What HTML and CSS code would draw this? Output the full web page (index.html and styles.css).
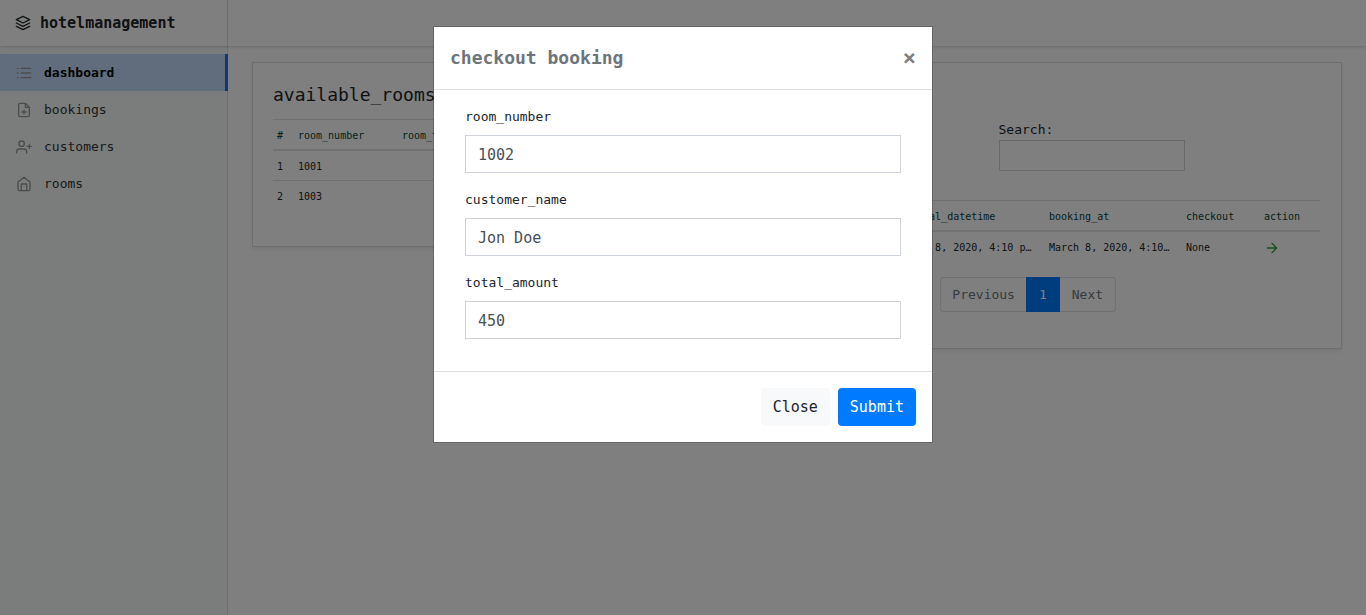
FILE: index.html
```html
<!DOCTYPE html>
<html lang="en">
<head>
<meta charset="utf-8">
<meta name="viewport" content="width=device-width, initial-scale=1">
<title>hotelmanagement</title>
<link rel="stylesheet" href="styles.css">
</head>
<body>
<div class="app">
  <header class="topbar">
    <a class="brand" href="#">
      <svg class="brand-icon" viewBox="0 0 24 24"><path d="M12 2 2 7l10 5 10-5-10-5zM2 17l10 5 10-5M2 12l10 5 10-5"/></svg>
      <span>hotelmanagement</span>
    </a>
  </header>
  <div class="layout">
    <nav class="sidebar">
      <a class="nav-link active" href="#">
        <svg class="nav-icon" viewBox="0 0 24 24"><path d="M8 5h14M8 12h14M8 19h14M2 5h1M2 12h1M2 19h1"/></svg>
        <span>dashboard</span>
      </a>
      <a class="nav-link" href="#">
        <svg class="nav-icon" viewBox="0 0 24 24"><path d="M14 2H6a2 2 0 0 0-2 2v16a2 2 0 0 0 2 2h12a2 2 0 0 0 2-2V8zM14 2v6h6M12 18v-6M9 15h6"/></svg>
        <span>bookings</span>
      </a>
      <a class="nav-link" href="#">
        <svg class="nav-icon" viewBox="0 0 24 24"><path d="M16 21v-2a4 4 0 0 0-4-4H5a4 4 0 0 0-4 4v2M20 8v6M23 11h-6"/><circle cx="8.500" cy="7" r="4"/></svg>
        <span>customers</span>
      </a>
      <a class="nav-link" href="#">
        <svg class="nav-icon" viewBox="0 0 24 24"><path d="M3 9l9-7 9 7v11a2 2 0 0 1-2 2H5a2 2 0 0 1-2-2zM8 22V12h8v10"/></svg>
        <span>rooms</span>
      </a>
    </nav>
    <main class="content">
      <section class="card">
        <h2 class="card-title">available_rooms</h2>
        <table class="table">
          <colgroup><col class="col-index"><col class="col-room"><col></colgroup>
          <thead><tr><th>#</th><th>room_number</th><th>room_type</th></tr></thead>
          <tbody>
            <tr><td>1</td><td>1001</td><td></td></tr>
            <tr><td>2</td><td>1003</td><td></td></tr>
          </tbody>
        </table>
      </section>
      <section class="card">
        <h2 class="card-title">bookings</h2>
        <div class="filters">
          <div class="search">
            <label for="search">Search:</label>
            <input class="search-input" id="search" type="search">
          </div>
        </div>
        <table class="table">
          <colgroup><col class="col-index"><col><col class="col-arrival"><col class="col-booking"><col class="col-checkout"><col class="col-action"></colgroup>
          <thead><tr><th>#</th><th>customer</th><th>arrival_datetime</th><th>booking_at</th><th>checkout</th><th>action</th></tr></thead>
          <tbody>
            <tr>
              <td>1</td><td>Jon Doe</td><td>March 8, 2020, 4:10 p…</td><td>March 8, 2020, 4:10…</td><td>None</td>
              <td><a class="row-action" href="#" aria-label="checkout"><svg class="action-icon" viewBox="0 0 24 24"><path d="M5 12h14M12 5l7 7-7 7"/></svg></a></td>
            </tr>
          </tbody>
        </table>
        <div class="table-footer">
          <div class="pagination">
            <button class="page" type="button">Previous</button>
            <button class="page current" type="button">1</button>
            <button class="page" type="button">Next</button>
          </div>
        </div>
      </section>
    </main>
  </div>
</div>
<div class="overlay">
  <form class="modal" role="dialog" aria-modal="true" aria-labelledby="modal-title">
    <div class="modal-header">
      <h1 class="modal-title" id="modal-title">checkout booking</h1>
      <button class="dismiss" type="button" aria-label="Close">×</button>
    </div>
    <div class="modal-body">
      <div class="field"><label for="room">room_number</label><input class="control" id="room" type="text" value="1002"></div>
      <div class="field"><label for="customer">customer_name</label><input class="control" id="customer" type="text" value="Jon Doe"></div>
      <div class="field"><label for="total">total_amount</label><input class="control" id="total" type="text" value="450"></div>
    </div>
    <div class="modal-footer">
      <button class="btn btn-light" type="button">Close</button>
      <button class="btn btn-primary" type="submit">Submit</button>
    </div>
  </form>
</div>
</body>
</html>
```
FILE: styles.css
```css
*, *::before, *::after { box-sizing: border-box; }

body {
  margin: 0;
  background: #fff;
  color: #212529;
  font: 13px/21px Consolas, "DejaVu Sans Mono", monospace;
}

button, input { font-family: inherit; }
a { color: inherit; text-decoration: none; }
svg { fill: none; stroke: currentColor; stroke-width: 2; stroke-linecap: round; stroke-linejoin: round; }

.app { display: flex; flex-direction: column; min-height: 100vh; }

.topbar {
  position: relative;
  display: flex;
  height: 46px;
  box-shadow: 0 1px 3px rgba(0, 0, 0, .16);
}
.brand {
  display: flex;
  align-items: center;
  gap: 9px;
  width: 228px;
  padding: 0 15px;
  border-right: 1px solid #dcdcdc;
  font-size: 15px;
  font-weight: 700;
}
.brand-icon { flex: none; width: 16px; height: 16px; }

.layout { display: flex; flex: 1; }

.sidebar {
  flex: none;
  width: 228px;
  padding-top: 8px;
  border-right: 1px solid #dcdcdc;
  background: #f6faf8;
}
.nav-link {
  display: flex;
  align-items: center;
  gap: 12px;
  height: 37px;
  padding: 0 16px;
  color: #333;
}
.nav-icon { flex: none; width: 16px; height: 16px; color: #999; }
.nav-link.active {
  margin-right: -1px;
  border-right: 3px solid #1a73e8;
  background: #c2dafa;
  color: #000;
  font-weight: 700;
}

.content {
  display: grid;
  flex: 1;
  grid-template-columns: minmax(0, 343fr) minmax(0, 717fr);
  gap: 30px;
  align-items: start;
  padding: 16px 24px;
}
.card {
  padding: 20px 21px 36px 20px;
  border: 1px solid #dcdcdc;
  background: #fff;
  box-shadow: 0 2px 4px rgba(0, 0, 0, .08);
}
.card-title { margin: 0 0 12px; font-size: 18px; font-weight: 400; line-height: 24px; }

.table { width: 100%; border-collapse: separate; border-spacing: 0; table-layout: fixed; font-size: 10px; line-height: 20px; }
.table th, .table td {
  padding: 6px 4px 3px;
  border-top: 1px solid #dee2e6;
  text-align: left;
  white-space: nowrap;
}
.table th { border-bottom: 2px solid #dee2e6; color: #064539; font-weight: 400; }
.table tbody tr:first-child td { border-top: 0; }
.col-index { width: 21px; }
.col-room { width: 104px; }
.col-arrival { width: 150px; }
.col-booking { width: 137px; }
.col-checkout { width: 78px; }
.col-action { width: 60px; }
.row-action { display: flex; color: #28a745; }
.action-icon { width: 16px; height: 16px; }

.filters { display: grid; grid-template-columns: 1fr 1fr; gap: 31px; margin-bottom: 29px; }
.search { display: flex; flex-direction: column; grid-column: 2; align-items: flex-start; }
.search-input { width: 186px; height: 31px; padding: 4px 8px; border: 1px solid #ced4da; border-radius: 0; background: #fff; appearance: none; }

.table-footer { display: grid; grid-template-columns: 5fr 7fr; margin: 16px -15px 0; }
.pagination { display: flex; grid-column: 2; padding: 0 16px; }
.page {
  height: 35px;
  padding: 0 12px;
  border: 1px solid #dee2e6;
  border-width: 1px 0;
  background: #fff;
  color: #6c757d;
  font-size: 13px;
}
.page:first-child { padding: 0 11px; border-left-width: 1px; border-radius: 4px 0 0 4px; }
.page:last-child { border-right-width: 1px; border-radius: 0 4px 4px 0; }
.page.current { padding: 0 13px; border-color: #007bff; background: #007bff; color: #fff; }

.overlay {
  position: fixed;
  inset: 0;
  display: flex;
  justify-content: center;
  align-items: flex-start;
  padding: 26px 16px;
  overflow: auto;
  background: rgba(0, 0, 0, .5);
}
.modal {
  width: 100%;
  max-width: 500px;
  border: 1px solid rgba(0, 0, 0, .2);
  background: #fff;
  background-clip: padding-box;
}
.modal-header {
  display: flex;
  align-items: center;
  justify-content: space-between;
  padding: 16px;
  border-bottom: 1px solid #dee2e6;
}
.modal-title { margin: 0; color: #6c757d; font-size: 18px; font-weight: 700; line-height: 30px; }
.dismiss { padding: 0; border: 0; background: none; color: #7f7f7f; font-size: 22px; font-weight: 700; line-height: 26px; }
.modal-body { padding: 16px 31px; }
.field { display: flex; flex-direction: column; gap: 8px; margin-bottom: 16px; }
.control {
  width: 100%;
  height: 38px;
  padding: 8px 12px 6px;
  border: 1px solid #ced4da;
  border-radius: 0;
  background: #fff;
  color: #495057;
  font-size: 15px;
}
.modal-footer { display: flex; justify-content: flex-end; gap: 8px; padding: 16px; border-top: 1px solid #dee2e6; }
.btn { height: 38px; padding: 0 11px; border: 1px solid transparent; border-radius: 4px; font-size: 15px; }
.btn-light { background: #f8f9fa; color: #212529; }
.btn-primary { background: #007bff; color: #fff; }
```
